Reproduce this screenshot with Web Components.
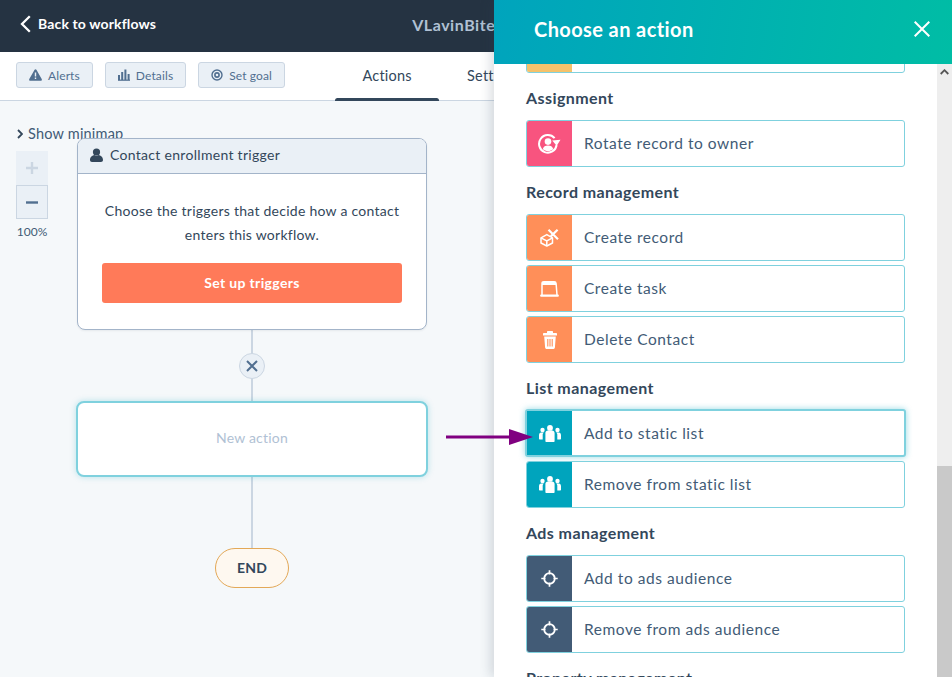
<!DOCTYPE html>
<html lang="en">
<head>
<meta charset="utf-8">
<title>Choose an action</title>
<style>
  html, body { margin: 0; height: 100%; overflow: hidden; }
  body { font-family: Lato, "Open Sans", sans-serif; color: #33475b; -webkit-font-smoothing: antialiased; }
</style>
</head>
<body>
<wf-app>
  <wf-topbar slot="top" title-text="VLavinBite">Back to workflows</wf-topbar>
  <wf-toolbar slot="top">
    <wf-chip icon="alert">Alerts</wf-chip>
    <wf-chip icon="bars">Details</wf-chip>
    <wf-chip icon="goal">Set goal</wf-chip>
  </wf-toolbar>
  <wf-canvas slot="main"></wf-canvas>
  <action-panel slot="overlay" heading="Choose an action">
    <action-row clipped color="#f5c26b"></action-row>
    <action-group heading="Assignment">
      <action-row color="#f8547f" icon="rotate">Rotate record to owner</action-row>
    </action-group>
    <action-group heading="Record management">
      <action-row color="#ff8f59" icon="cube">Create record</action-row>
      <action-row color="#ff8f59" icon="task">Create task</action-row>
      <action-row color="#ff8f59" icon="trash">Delete Contact</action-row>
    </action-group>
    <action-group heading="List management">
      <action-row color="#00a4bd" icon="people" focused>Add to static list</action-row>
      <action-row color="#00a4bd" icon="people">Remove from static list</action-row>
    </action-group>
    <action-group heading="Ads management">
      <action-row color="#425b76" icon="target">Add to ads audience</action-row>
      <action-row color="#425b76" icon="target">Remove from ads audience</action-row>
    </action-group>
    <action-group heading="Property management"></action-group>
  </action-panel>
  <svg slot="overlay" style="position:absolute;left:445px;top:427px" width="90" height="20" viewBox="0 0 90 20">
    <path d="M1 10H66" stroke="#800080" stroke-width="3"/>
    <path d="M64 2L88 10L64 18Z" fill="#800080"/>
  </svg>
</wf-app>

<script>
const ICONS = {
  alert: '<svg width="13" height="12" viewBox="0 0 13 12"><path fill="#516f90" d="M6.5.3c.4 0 .7.2.9.5l5.3 9.3c.4.7 0 1.6-.9 1.6H1.2c-.9 0-1.3-.9-.9-1.6L5.6.8c.2-.3.5-.5.9-.5z"/><path stroke="#eaf0f6" stroke-width="1.4" d="M6.5 3.6v4M6.5 8.6v1.3"/></svg>',
  bars: '<svg width="12" height="12" viewBox="0 0 12 12" fill="#516f90"><rect x="0" y="6" width="2" height="5"/><rect x="3.2" y="3" width="2" height="8"/><rect x="6.4" y="0.5" width="2" height="10.5"/><rect x="9.6" y="5" width="2" height="6"/><rect y="10.6" width="12" height="1.2"/></svg>',
  goal: '<svg width="12" height="12" viewBox="0 0 12 12" fill="none" stroke="#516f90"><circle cx="6" cy="6" r="5" stroke-width="1.4"/><circle cx="6" cy="6" r="2.1" stroke-width="1.6"/></svg>',
  rotate: '<svg width="23" height="21" viewBox="0 0 23 21" fill="none"><path d="M16.6 5.2A8.8 8.8 0 1 0 18.6 12" stroke="#fff" stroke-width="2"/><path d="M14.2 7.4l8.3-.6-3.8 6z" fill="#fff"/><circle cx="10" cy="8.6" r="3.3" fill="#fff"/><path d="M4.8 16c.6-2.6 2.6-3.6 5.2-3.6s4.600 1 5.200 3.600c-1.400 1.400-3.200 2.200-5.200 2.200s-3.800-.8-5.200-2.200z" fill="#fff"/></svg>',
  cube: '<svg width="19" height="18" viewBox="0 0 19 18" fill="none" stroke="#fff" stroke-width="1.500"><path d="M6.800 5.600L12.500 8.800V14L6.800 17L1 14V8.800Z" stroke-linejoin="round"/><path d="M1 8.800L6.800 11.800L12.500 8.800M6.800 11.800V17"/><path d="M8.500 .8L18 10.200M17.600 .8L10.800 7.400" stroke-width="2.200"/></svg>',
  task: '<svg width="19" height="16" viewBox="0 0 19 16" fill="none" stroke="#fff"><path d="M2 14V2.500C2 1.300 2.700.8 3.800.8H14.200C15.300.8 16 1.300 16.100 2.500L17 14" stroke-width="1.500"/><path d="M2 2.400H16" stroke-width="3"/><path d="M1.200 14.700H17.800" stroke-width="2.200" stroke-linecap="round"/></svg>',
  trash: '<svg width="14" height="18" viewBox="0 0 14 18"><path fill="#fff" d="M5 0h4c.6 0 1 .4 1 1v1h3.200c.5 0 .8.300.8.800V4.500H0V2.800C0 2.300.3 2 .8 2H4V1c0-.6.4-1 1-1zM1.200 5.600h11.600l-.9 11c-.1.800-.6 1.300-1.300 1.300H3.400c-.7 0-1.200-.5-1.300-1.300z"/><path stroke="#ff8f59" stroke-width="1.100" d="M4.800 8v7.400M7 8v7.400M9.200 8v7.400"/></svg>',
  people: '<svg width="22" height="17" viewBox="0 0 22 17" fill="#fff"><circle cx="11" cy="2.900" r="2.900"/><path d="M6.400 8c0-1.600 1.100-2.500 2.500-2.500h4.200c1.400 0 2.500.9 2.500 2.500v8c0 .6-.4 1-1 1H7.400c-.6 0-1-.4-1-1z"/><circle cx="3.500" cy="5" r="2.200"/><path d="M0 10.200c0-1.500.8-2.800 2.200-2.800h2.700c-.8.600-1.200 1.300-1.200 2.200v4.800H1c-.6 0-1-.4-1-1z"/><circle cx="18.500" cy="5" r="2.200"/><path d="M22 10.200c0-1.500-.8-2.800-2.200-2.800h-2.700c.8.600 1.200 1.300 1.200 2.200v4.800H21c.6 0 1-.4 1-1z"/></svg>',
  target: '<svg width="17" height="17" viewBox="0 0 17 17" fill="none" stroke="#fff"><circle cx="8.500" cy="8.500" r="5.300" stroke-width="1.800"/><path d="M8.500 .3V4.500M8.500 12.500v4.200M.3 8.500H4.500M12.500 8.500h4.200" stroke-width="1.700"/></svg>'
};

function shadow(el, html) {
  el.attachShadow({ mode: 'open' }).innerHTML = html;
}

class WfApp extends HTMLElement {
  constructor() {
    super();
    shadow(this, `
      <style>
        :host { display: flex; flex-direction: column; width: 952px; height: 677px; position: relative; overflow: hidden; }
        .main { flex: 1; display: flex; min-height: 0; }
      </style>
      <slot name="top"></slot>
      <div class="main"><slot name="main"></slot></div>
      <slot name="overlay"></slot>`);
  }
}

class WfTopbar extends HTMLElement {
  constructor() {
    super();
    shadow(this, `
      <style>
        :host { display: flex; align-items: center; height: 52px; background: #253342; padding: 0 0 4px 20px; box-sizing: border-box; flex: none; }
        .back { display: flex; align-items: center; gap: 7px; color: #fff; font-weight: 700; font-size: 14px; letter-spacing: .14px; margin-bottom: 1px; }
        .name { margin-left: 256px; color: #b0c1d4; font-weight: 700; font-size: 16px; letter-spacing: .55px; white-space: nowrap; }
      </style>
      <div class="back">
        <svg width="11" height="18" viewBox="0 0 11 18" fill="none" stroke="#fff" stroke-width="2.300"><path d="M9.800 1.200L2 9l7.800 7.800"/></svg>
        <slot></slot>
      </div>
      <div class="name">${this.getAttribute('title-text')}</div>`);
  }
}

class WfChip extends HTMLElement {
  constructor() {
    super();
    shadow(this, `
      <style>
        :host { display: inline-flex; align-items: center; gap: 6px; height: 26px; box-sizing: border-box; padding: 0 12px; background: #eaf0f6; border: 1px solid #cbd6e2; border-radius: 3px; color: #516f90; font-size: 12px; letter-spacing: .12px; }
        svg { display: block; }
      </style>
      ${ICONS[this.getAttribute('icon')]}<slot></slot>`);
  }
}

class WfToolbar extends HTMLElement {
  constructor() {
    super();
    shadow(this, `
      <style>
        :host { display: flex; height: 49px; box-sizing: border-box; background: #fff; border-bottom: 1px solid #cbd6e2; flex: none; }
        .chips { display: flex; align-items: center; gap: 12px; padding: 0 0 2px 16px; }
        .tabs { display: flex; margin-left: 50px; }
        .tab { position: relative; width: 104px; display: flex; align-items: center; justify-content: center; padding-bottom: 2px; font-size: 14.500px; letter-spacing: .2px; color: #33475b; }
        .tab.active::after { content: ""; position: absolute; left: 0; right: 0; bottom: -3px; height: 5px; border-radius: 3px; background: #33475b; }
        .tab + .tab { width: auto; margin-left: 28px; justify-content: flex-start; }
      </style>
      <div class="chips"><slot></slot></div>
      <div class="tabs"><div class="tab active">Actions</div><div class="tab">Settings</div></div>`);
  }
}

/* free canvas: the workflow diagram, nodes sit at their own coordinates */
class WfCanvas extends HTMLElement {
  constructor() {
    super();
    shadow(this, `
      <style>
        :host { display: block; flex: 1; position: relative; background: #f5f8fa; font-size: 14px; }
        .minimap { position: absolute; left: 17px; top: 24px; display: flex; align-items: center; gap: 5px; color: #425b76; font-size: 14.500px; letter-spacing: .2px; }
        .zoom { position: absolute; left: 16px; top: 50px; width: 32px; }
        .zoom div { height: 34px; box-sizing: border-box; display: flex; align-items: center; justify-content: center; background: #eaf0f6; }
        .zoom .minus { border: 1px solid #cbd6e2; }
        .zoom span { display: block; margin-top: 5px; font-size: 12px; text-align: center; color: #425b76; margin-left: -4px; margin-right: -4px; }
        .line { position: absolute; left: 251px; top: 229px; width: 2px; height: 218px; background: #cbd6e2; }
        .close { position: absolute; left: 239px; top: 252px; width: 26px; height: 26px; box-sizing: border-box; border: 1px solid #cbd6e2; border-radius: 50%; background: #eaf0f6; display: flex; align-items: center; justify-content: center; }
        .trigger { position: absolute; left: 77px; top: 37px; width: 350px; height: 192px; box-sizing: border-box; border: 1px solid #a3b4c9; border-radius: 8px; background: #fff; overflow: hidden; box-shadow: 0 1px 2px rgba(45,62,80,.08); }
        .trigger header { display: flex; align-items: center; gap: 7px; height: 35px; box-sizing: border-box; padding: 0 0 3px 12px; background: #eaf0f6; border-bottom: 1px solid #a3b4c9; font-size: 14px; letter-spacing: .3px; color: #33475b; }
        .trigger p { margin: 25px 20px 16px; text-align: center; line-height: 24px; font-size: 14px; letter-spacing: .26px; color: #33475b; }
        .trigger button { display: block; width: 300px; height: 40px; margin: 0 auto; padding: 0 0 2px; border: 0; border-radius: 3px; background: #ff7a59; color: #fff; font: 700 14px Lato, sans-serif; letter-spacing: .35px; }
        .action { position: absolute; left: 76px; top: 300px; width: 352px; height: 76px; box-sizing: border-box; padding-bottom: 3px; border: 2px solid #7fd1de; border-radius: 8px; background: #fff; box-shadow: 0 0 6px rgba(0,164,189,.25); display: flex; align-items: center; justify-content: center; color: #b0c1d4; font-size: 14px; letter-spacing: .2px; }
        .end { position: absolute; left: 215px; top: 447px; width: 74px; height: 40px; box-sizing: border-box; border: 1px solid #e3a857; border-radius: 20px; background: #fef8f0; display: flex; align-items: center; justify-content: center; font-size: 14px; font-weight: 700; letter-spacing: .2px; color: #33475b; padding-bottom: 2px; }
      </style>
      <div class="minimap">
        <svg width="6" height="10" viewBox="0 0 6 10" fill="none" stroke="#33475b" stroke-width="1.800"><path d="M1 1l4 4-4 4"/></svg>
        Show minimap
      </div>
      <div class="zoom">
        <div><svg width="12" height="12" viewBox="0 0 12 12" stroke="#cbd6e2" stroke-width="2.400"><path d="M6 0v12M0 6h12"/></svg></div>
        <div class="minus"><svg width="12" height="3" viewBox="0 0 12 3" stroke="#516f90" stroke-width="2.400"><path d="M0 1.500h12"/></svg></div>
        <span>100%</span>
      </div>
      <div class="line"></div>
      <div class="trigger">
        <header>
          <svg width="13" height="14" viewBox="0 0 13 14" fill="#33475b"><circle cx="6.500" cy="4" r="3.600"/><path d="M0 12c0-3 2.500-4.600 4.300-4.900 1.400.8 3 .8 4.400 0C10.500 7.400 13 9 13 12c0 1.300-.8 2-2 2H2c-1.200 0-2-.7-2-2z"/></svg>
          Contact enrollment trigger
        </header>
        <p>Choose the triggers that decide how a contact enters this workflow.</p>
        <button>Set up triggers</button>
      </div>
      <div class="close"><svg width="12" height="12" viewBox="0 0 12 12" stroke="#516f90" stroke-width="2"><path d="M1 1l10 10M11 1L1 11"/></svg></div>
      <div class="action">New action</div>
      <div class="end">END</div>`);
  }
}

class ActionPanel extends HTMLElement {
  constructor() {
    super();
    shadow(this, `
      <style>
        :host { position: absolute; left: 494px; top: 0; width: 458px; height: 677px; display: flex; flex-direction: column; background: #fff; box-shadow: -4px 0 10px rgba(45,62,80,.16); }
        header { display: flex; align-items: center; justify-content: space-between; height: 64px; flex: none; padding: 0 22px 6px 40px; box-sizing: border-box; background: linear-gradient(100deg, #00a4bd, #00bda5); color: #fff; font-size: 20px; font-weight: 700; letter-spacing: .4px; }
        .body { flex: 1; display: flex; min-height: 0; }
        .list { flex: 1; overflow: hidden; padding: 0 32px; }
        .bar { width: 15px; flex: none; background: #eeeeee; display: flex; flex-direction: column; align-items: center; }
        .bar svg { margin-top: 5px; }
        .thumb { margin-top: auto; width: 15px; height: 211px; background: #c9c9c9; }
      </style>
      <header>
        <span>${this.getAttribute('heading')}</span>
        <svg width="16" height="16" viewBox="0 0 16 16" stroke="#fff" stroke-width="2"><path d="M.7.7l14.600 14.600M15.300.7L.7 15.300"/></svg>
      </header>
      <div class="body">
        <div class="list"><slot></slot></div>
        <div class="bar">
          <svg width="9" height="6" viewBox="0 0 9 6" fill="none" stroke="#555" stroke-width="1.800"><path d="M.7 5l3.800-3.800L8.300 5"/></svg>
          <div class="thumb"></div>
        </div>
      </div>`);
  }
}

class ActionGroup extends HTMLElement {
  constructor() {
    super();
    shadow(this, `
      <style>
        :host { display: block; }
        h3 { margin: 0; height: 43px; display: flex; align-items: center; font-size: 16px; font-weight: 700; letter-spacing: .42px; color: #33475b; padding-bottom: 3px; box-sizing: border-box; white-space: nowrap; }
      </style>
      <h3>${this.getAttribute('heading')}</h3>
      <slot></slot>`);
  }
}

class ActionRow extends HTMLElement {
  constructor() {
    super();
    const icon = this.getAttribute('icon');
    shadow(this, `
      <style>
        :host { display: flex; height: 47px; margin-bottom: 4px; box-sizing: border-box; border: 1px solid #7fd1de; border-radius: 3px; background: #fff; overflow: hidden; font-size: 15.500px; letter-spacing: .55px; color: #425b76; align-items: stretch; }
        :host([clipped]) { margin-top: -38px; }
        :host([focused]) { height: 48px; margin: -1px -1px 4px; border-width: 2px; overflow: visible; box-shadow: 0 0 6px rgba(0,164,189,.4); }
        .ico { width: 45px; flex: none; display: flex; align-items: center; justify-content: center; background: ${this.getAttribute('color')}; }
        .txt { display: flex; align-items: center; padding-left: 12px; padding-bottom: 1px; white-space: nowrap; }
      </style>
      <div class="ico">${icon ? ICONS[icon] : ''}</div>
      <div class="txt"><slot></slot></div>`);
  }
}

customElements.define('wf-app', WfApp);
customElements.define('wf-topbar', WfTopbar);
customElements.define('wf-chip', WfChip);
customElements.define('wf-toolbar', WfToolbar);
customElements.define('wf-canvas', WfCanvas);
customElements.define('action-panel', ActionPanel);
customElements.define('action-group', ActionGroup);
customElements.define('action-row', ActionRow);
</script>
</body>
</html>
